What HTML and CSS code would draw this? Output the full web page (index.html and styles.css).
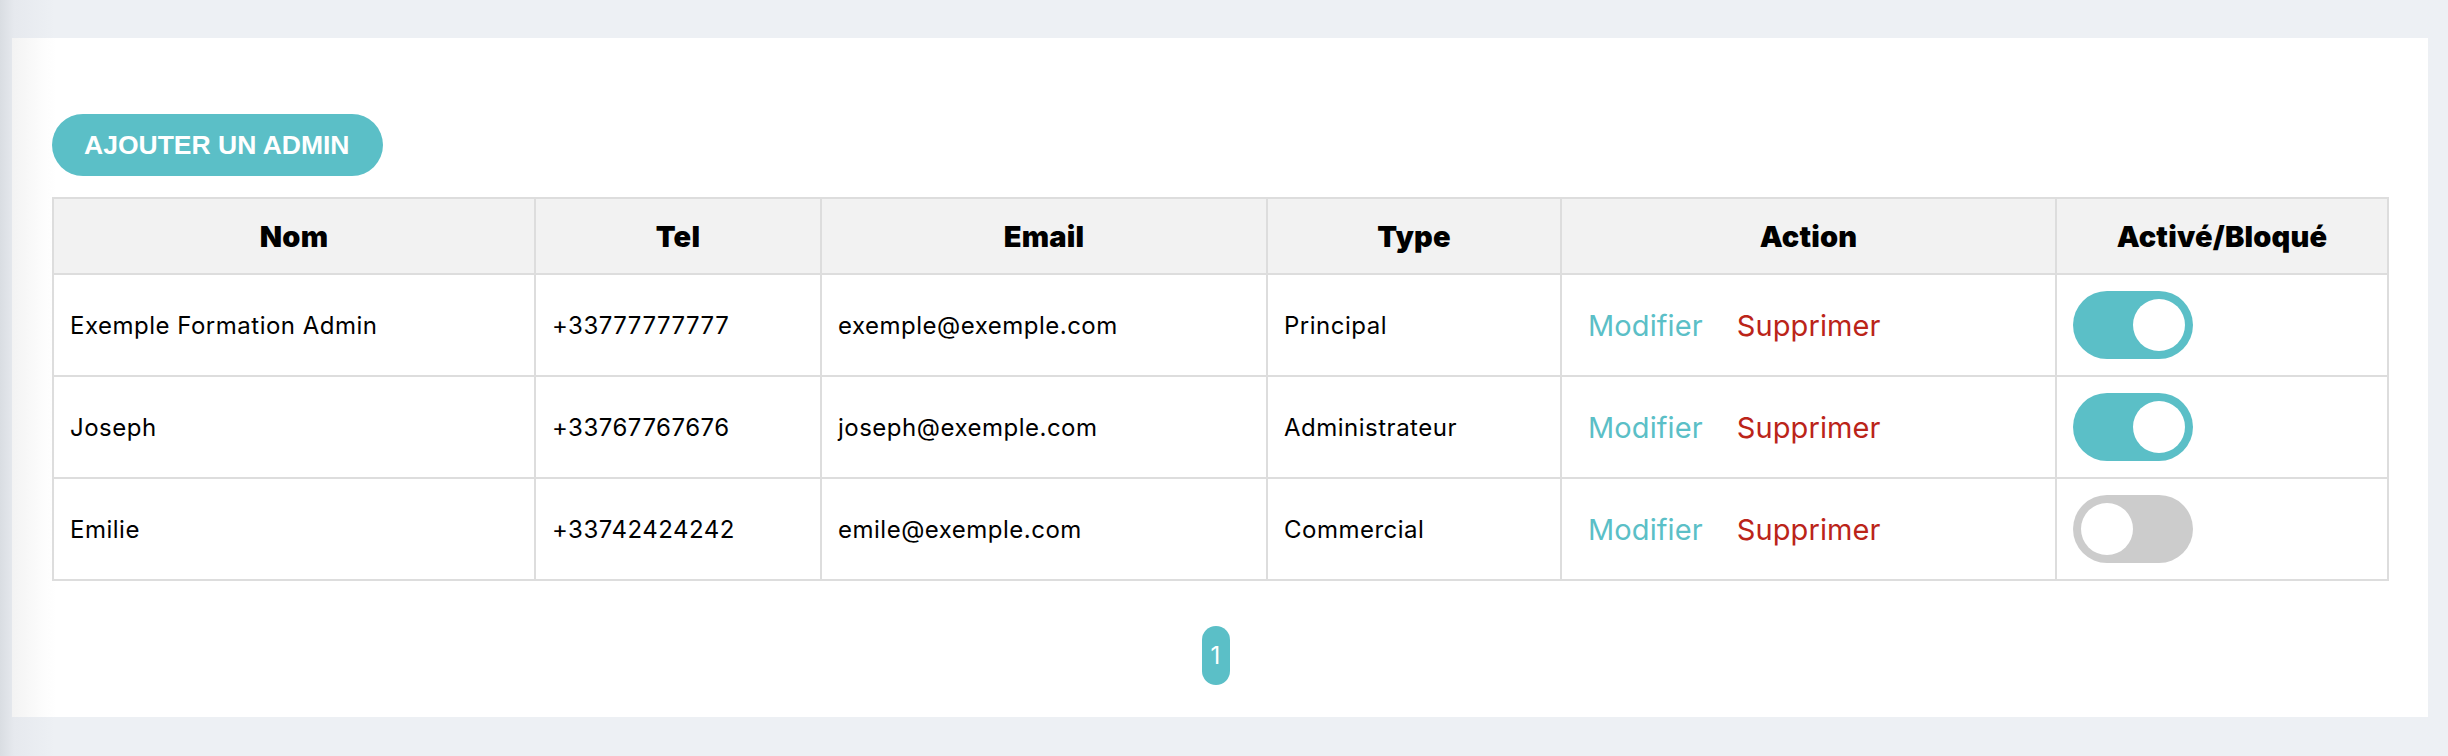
FILE: index.html
```html
<!DOCTYPE html>
<html lang="fr">
<head>
<meta charset="utf-8">
<title>Admins</title>
<link rel="stylesheet" href="styles.css">
</head>
<body>
<main class="card">
  <button class="btn-add">AJOUTER UN ADMIN</button>
  <table class="admins">
    <colgroup>
      <col class="c-nom"><col class="c-tel"><col class="c-email"><col class="c-type"><col class="c-action"><col class="c-state">
    </colgroup>
    <thead>
      <tr><th>Nom</th><th>Tel</th><th>Email</th><th>Type</th><th>Action</th><th>Activé/Bloqué</th></tr>
    </thead>
    <tbody>
      <tr>
        <td>Exemple Formation Admin</td><td>+33777777777</td><td>exemple@exemple.com</td><td>Principal</td>
        <td class="actions"><a class="edit">Modifier</a><a class="del">Supprimer</a></td>
        <td><span class="toggle on"><span class="knob"></span></span></td>
      </tr>
      <tr>
        <td>Joseph</td><td>+33767767676</td><td>joseph@exemple.com</td><td>Administrateur</td>
        <td class="actions"><a class="edit">Modifier</a><a class="del">Supprimer</a></td>
        <td><span class="toggle on"><span class="knob"></span></span></td>
      </tr>
      <tr>
        <td>Emilie</td><td>+33742424242</td><td>emile@exemple.com</td><td>Commercial</td>
        <td class="actions"><a class="edit">Modifier</a><a class="del">Supprimer</a></td>
        <td><span class="toggle"><span class="knob"></span></span></td>
      </tr>
    </tbody>
  </table>
  <nav class="pager"><span class="page">1</span></nav>
</main>
</body>
</html>
```

FILE: styles.css
```css
html, body {
  margin: 0;
  padding: 0;
}
body {
  background: linear-gradient(to right, #d9dde2 0, #e6e9ee 14px, #edf0f4 55px);
  min-height: 756px;
  padding: 38px 20px 39px 12px;
  box-sizing: border-box;
  font-family: Inter, "Noto Sans", sans-serif;
  color: #000;
}
.card {
  display: flex;
  flex-direction: column;
  align-items: flex-start;
  background: linear-gradient(to right, #f3f3f3 0, #fcfcfc 30px, #fff 44px);
  height: 679px;
  box-sizing: border-box;
  padding: 76px 40px 0 40px;
}
.btn-add {
  height: 62px;
  width: 331px;
  border: 0;
  border-radius: 31px;
  background: #5bbfc7;
  color: #fff;
  font-family: "Liberation Sans", Arial, sans-serif;
  font-weight: bold;
  font-size: 26.5px;
  padding: 0 0 0 32px;
  text-align: left;
  margin-bottom: 21px;
}
.admins {
  width: 2337px;
  border-collapse: collapse;
  table-layout: fixed;
  border: 2px solid #dddddd;
}
.c-nom { width: 482px; }
.c-tel { width: 286px; }
.c-email { width: 446px; }
.c-type { width: 294px; }
.c-action { width: 495px; }
.c-state { width: 332px; }
.admins th, .admins td {
  border: 2px solid #dddddd;
  padding: 0 16px;
  text-align: left;
}
.admins th {
  background: #f2f2f2;
  height: 74px;
  text-align: center;
  font-weight: 900;
  font-size: 29px;
  letter-spacing: 0.2px;
}
.admins td {
  height: 100px;
  font-size: 24px;
  font-weight: 400;
  letter-spacing: 0.5px;
}
.admins td.actions {
  padding-left: 26px;
}
.edit, .del {
  font-size: 29px;
  font-weight: 400;
  letter-spacing: 0.1px;
}
.edit { color: #5bbfc7; margin-right: 34px; }
.del { color: #bb2419; }
.toggle {
  display: flex;
  align-items: center;
  width: 120px;
  height: 68px;
  border-radius: 34px;
  background: #cccccc;
  padding: 0 8px;
  box-sizing: border-box;
}
.toggle.on {
  background: #5bbfc7;
  justify-content: flex-end;
}
.knob {
  width: 52px;
  height: 52px;
  border-radius: 50%;
  background: #fff;
}
.pager {
  align-self: stretch;
  display: flex;
  justify-content: center;
  align-items: flex-start;
  margin-top: 45px;
  padding-right: 9px;
}
.page {
  width: 28px;
  height: 59px;
  border-radius: 14px;
  background: #5bbfc7;
  color: #fff;
  font-size: 24px;
  display: flex;
  align-items: center;
  justify-content: center;
}
```
